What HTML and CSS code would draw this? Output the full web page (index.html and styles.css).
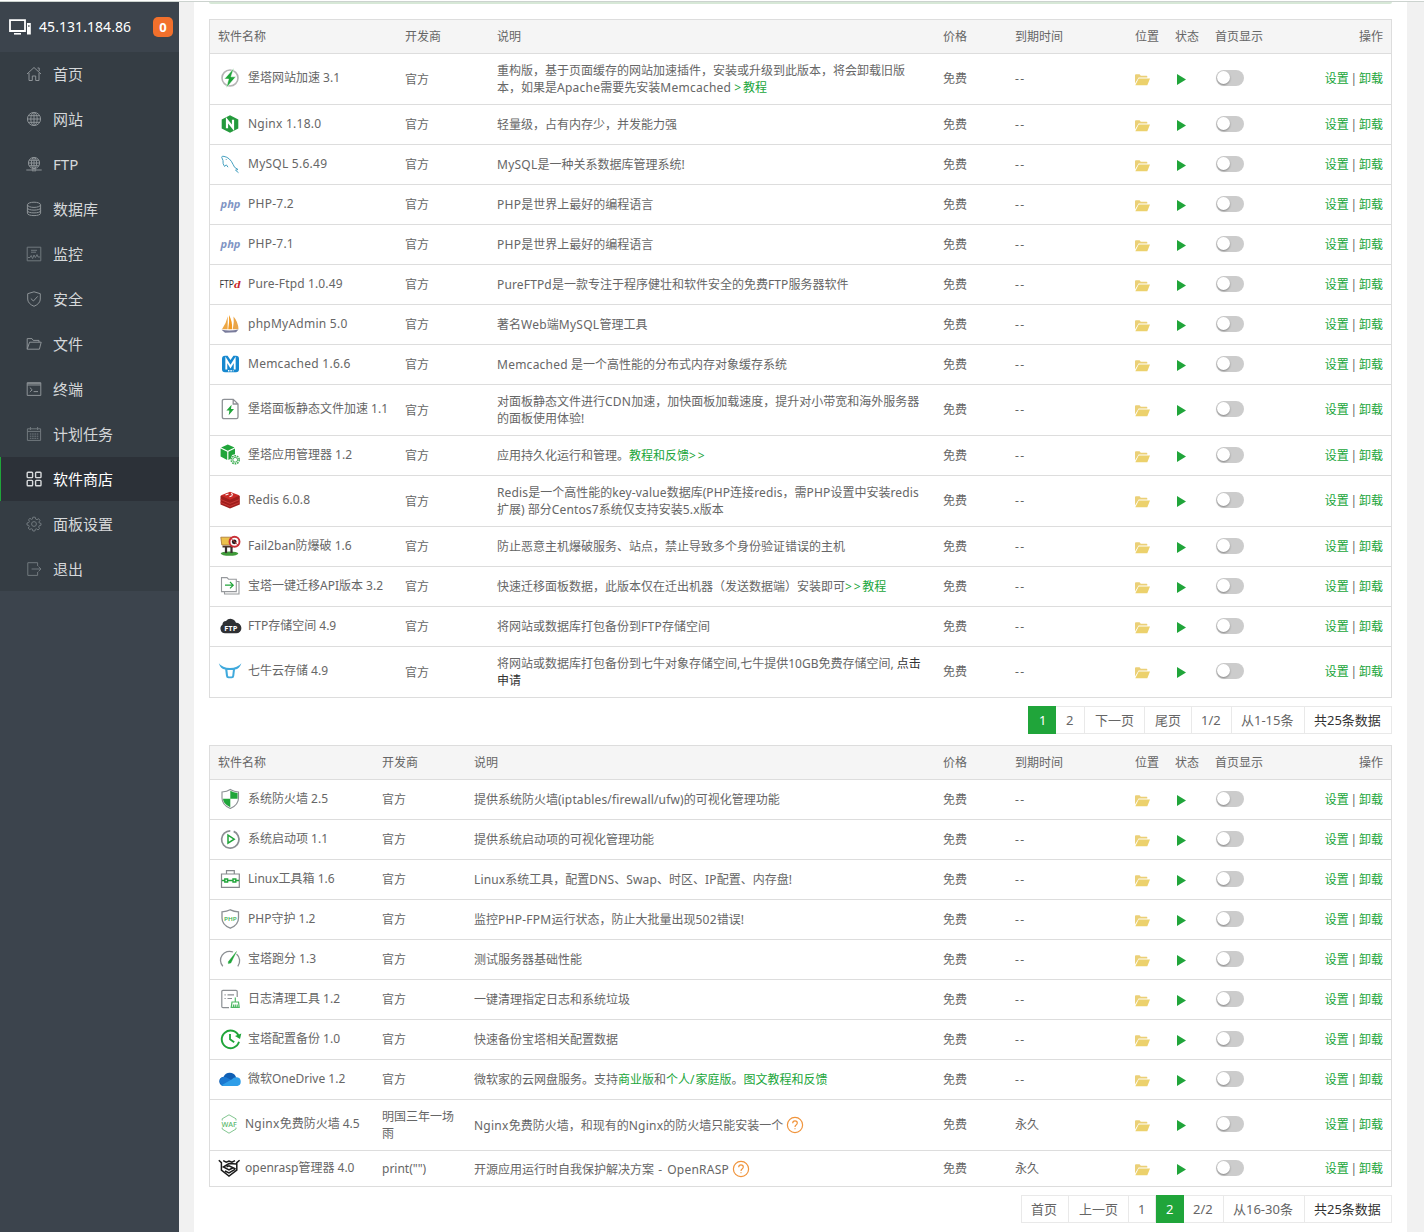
FILE: index.html
```html
<!DOCTYPE html>
<html lang="zh-CN">
<head>
<meta charset="utf-8">
<title>软件商店</title>
<link rel="stylesheet" href="styles.css">
</head>
<body>
<svg class="defs" aria-hidden="true">
  <symbol id="folder" viewBox="0 0 15 12"><path d="M0 9.5V1.2Q0 .3 1 .3H4.6L5.8 1.7H11.6Q12.3 1.7 12.3 2.6V3.6H3.6Z" fill="#ebd077"/><path d="M3.7 4.5H15L12.3 11.3H.3Z" fill="#ecd16c"/></symbol>
  <symbol id="help" viewBox="0 0 18 18"><circle cx="9" cy="9" r="7.6" fill="none" stroke="#f0943c" stroke-width="1.2"/><path d="M6.7 7.2Q6.7 4.9 9 4.9T11.3 7.1Q11.3 8.1 10.1 8.9Q9 9.6 9 10.9M9 12.2V13.3" fill="none" stroke="#f0943c" stroke-width="1.2"/></symbol>
</svg>
<div class="topline"></div>
<div class="app">
  <aside class="sidebar">
    <div class="host">
      <svg class="host-icon" viewBox="0 0 24 18"><path d="M2 2.2H17V13H2Z" fill="none" stroke="#fff" stroke-width="1.8"/><path d="M6 15.8H13" stroke="#fff" stroke-width="1.6"/><path d="M19 5H22.8V16.5H19Z" fill="#fff"/><path d="M20.9 7V9" stroke="#3c444d"/></svg>
      <span class="host-ip">45.131.184.86</span>
      <span class="badge">0</span>
    </div>
    <nav class="menu">
      <a class="item"><svg viewBox="0 0 16 16"><path d="M1 8 8 1.5 15 8M3 7V14.5H6.3V10H9.7V14.5H13V7M11.5 2H13.2V5"/></svg>首页</a>
      <a class="item"><svg viewBox="0 0 16 16"><circle cx="8" cy="8" r="6.6"/><ellipse cx="8" cy="8" rx="3.2" ry="6.6"/><path d="M8 1.4V14.6M1.4 8H14.6M2.4 4.7H13.6M2.4 11.3H13.6"/></svg>网站</a>
      <a class="item"><svg viewBox="0 0 16 16"><circle cx="8" cy="7" r="5.6"/><ellipse cx="8" cy="7" rx="2.6" ry="5.6"/><path d="M8 1.4V12.6M2.4 7H13.6M3.2 4.3H12.8M3.2 9.7H12.8M.3 14H5.5M10.5 14H15.7M6 13.2H10V14.8H6Z"/></svg>FTP</a>
      <a class="item"><svg viewBox="0 0 16 16"><ellipse cx="8" cy="3.8" rx="6.6" ry="2.6"/><path d="M1.4 4V12.2C1.4 15.4 14.6 15.4 14.6 12.2V4M1.4 7C1.4 9.8 14.6 9.8 14.6 7M1.4 9.8C1.4 12.6 14.6 12.6 14.6 9.8"/></svg>数据库</a>
      <a class="item dim"><svg viewBox="0 0 16 16"><path d="M1.2 1.2H14.8V14.8H1.2ZM5 4.3H11M5 6.2H10M2 11.5H4L5.2 9.5 6.6 12.6 8 9 9.4 11.6 11 8.6 12 11H14"/></svg>监控</a>
      <a class="item"><svg viewBox="0 0 16 16"><path d="M8 .8 14.3 2.7V8Q14.3 12.6 8 15.3 1.7 12.6 1.7 8V2.7ZM4.8 7.5 7.4 10 11.7 5.4"/></svg>安全</a>
      <a class="item"><svg viewBox="0 0 16 16"><path d="M1.2 13.2V2.6H6L7.2 4.4H13V6.2M1.2 13.2 3.6 6.2H15.2L13.4 13.2Z"/></svg>文件</a>
      <a class="item"><svg viewBox="0 0 16 16"><path d="M1.2 1.7H14.8V14.4H1.2ZM1.2 4H14.8M1.2 2.7H14.8M3.8 6.5 6.2 8.8 3.8 11M7.6 10.6H12"/></svg>终端</a>
      <a class="item dim"><svg viewBox="0 0 16 16"><path d="M1.4 2.8H14.6V14.4H1.4ZM1.4 5.4H14.6M4.4 1V4M11.6 1V4"/><path d="M3.8 8H12.4M3.8 10.2H12.4M3.8 12.3H12.4" stroke-dasharray="1.6 .7"/></svg>计划任务</a>
      <a class="item active"><svg viewBox="0 0 16 16"><rect x="1.2" y="1.2" width="5.4" height="5.4" rx=".8"/><rect x="9.6" y="1.2" width="5.4" height="5.4" rx=".8"/><rect x="1.2" y="9.4" width="5.4" height="5.4" rx=".8"/><rect x="9.6" y="9.4" width="5.4" height="5.4" rx=".8"/></svg>软件商店</a>
      <a class="item dim"><svg viewBox="0 0 16 16"><circle cx="8" cy="8" r="2.4"/><path d="M6.8 1.2H9.2L9.7 3.1 11 3.7 12.7 2.7 14 4.4 12.9 6 13.3 7 15 7.4V9.2L13.2 9.7 12.7 11 13.5 12.6 12 13.9 10.4 12.8 9.3 13.3 8.9 15H6.9L6.4 13.2 5.2 12.7 3.6 13.6 2.3 12 3.3 10.4 2.8 9.4 1 9V7L2.8 6.5 3.4 5.3 2.5 3.7 4 2.4 5.6 3.4 6.5 3Z"/></svg>面板设置</a>
      <a class="item dim"><svg viewBox="0 0 16 16"><path d="M11.6 5V1.7H1.8V14.4H11.6V11M5.6 8H15M12.5 5.6 15 8 12.5 10.4"/></svg>退出</a>
    </nav>
  </aside>
  <main class="panel">
    <div class="notice"></div>
    <table class="soft first">
      <colgroup><col class="c-name"><col class="c-dev"><col class="c-desc"><col class="c-price"><col class="c-time"><col class="c-icon"><col class="c-icon"><col class="c-op"></colgroup>
      <thead><tr><th>软件名称</th><th>开发商</th><th>说明</th><th>价格</th><th>到期时间</th><th>位置</th><th>状态</th><th><div class="op"><span>首页显示</span><span>操作</span></div></th></tr></thead>
      <tbody>
        <tr class="tall"><td><div class="name"><svg viewBox="0 0 24 24"><circle cx="12" cy="12" r="8" fill="none" stroke="#b4b4b4" stroke-width="1.6"/><path d="M15.8 2.2 6.4 13H10.6L8.4 21.8 17.8 10.8H13Z" fill="#20a53a" stroke="#fff" stroke-width=".5"/></svg>堡塔网站加速 3.1</div></td><td>官方</td><td>重构版，基于页面缓存的网站加速插件，安装或升级到此版本，将会卸载旧版<br>本，如果是<span class="w">Apache</span>需要先安装<span class="w">Memcached</span> <a><span class="gt">&gt;</span>教程</a></td><td>免费</td><td class="nil">--</td><td><svg class="fold"><use href="#folder"/></svg></td><td><i class="play"></i></td><td><div class="op"><i class="switch"></i><span class="links"><a>设置</a> | <a>卸载</a></span></div></td></tr>
        <tr><td><div class="name"><svg viewBox="0 0 24 24"><path d="M12 3.2 20.3 7.6V16.4L12 20.8 3.7 16.4V7.6Z" fill="#249a3c"/><path d="M9 16.2V8.2L15 15.8V7.8" fill="none" stroke="#fff" stroke-width="2.2"/></svg><span class="w">Nginx 1.18.0</span></div></td><td>官方</td><td>轻量级，占有内存少，并发能力强</td><td>免费</td><td class="nil">--</td><td><svg class="fold"><use href="#folder"/></svg></td><td><i class="play"></i></td><td><div class="op"><i class="switch"></i><span class="links"><a>设置</a> | <a>卸载</a></span></div></td></tr>
        <tr><td><div class="name"><svg viewBox="0 0 24 24"><path d="M6.6 14.5Q4.5 12 5 8.5L3.7 5.2Q3.8 3.7 6 4.4 12 5.5 15 12.3 15.8 15.8 20 17.5L17.5 18.2 20.5 20.7M6.6 14.5 8.3 12.8 10 15.2M8 7.2 8.6 8" fill="none" stroke="#45a0c0" stroke-width="1"/></svg><span class="w">MySQL 5.6.49</span></div></td><td>官方</td><td><span class="w">MySQL</span>是一种关系数据库管理系统!</td><td>免费</td><td class="nil">--</td><td><svg class="fold"><use href="#folder"/></svg></td><td><i class="play"></i></td><td><div class="op"><i class="switch"></i><span class="links"><a>设置</a> | <a>卸载</a></span></div></td></tr>
        <tr><td><div class="name"><svg viewBox="0 0 24 24"><text x="2.5" y="15.5" class="t-php" textLength="20" lengthAdjust="spacingAndGlyphs">php</text></svg><span class="w">PHP-7.2</span></div></td><td>官方</td><td><span class="w">PHP</span>是世界上最好的编程语言</td><td>免费</td><td class="nil">--</td><td><svg class="fold"><use href="#folder"/></svg></td><td><i class="play"></i></td><td><div class="op"><i class="switch"></i><span class="links"><a>设置</a> | <a>卸载</a></span></div></td></tr>
        <tr><td><div class="name"><svg viewBox="0 0 24 24"><text x="2.5" y="15.5" class="t-php" textLength="20" lengthAdjust="spacingAndGlyphs">php</text></svg><span class="w">PHP-7.1</span></div></td><td>官方</td><td><span class="w">PHP</span>是世界上最好的编程语言</td><td>免费</td><td class="nil">--</td><td><svg class="fold"><use href="#folder"/></svg></td><td><i class="play"></i></td><td><div class="op"><i class="switch"></i><span class="links"><a>设置</a> | <a>卸载</a></span></div></td></tr>
        <tr><td><div class="name"><svg viewBox="0 0 24 24"><text x="1.5" y="16" class="t-ftp" textLength="14.5" lengthAdjust="spacingAndGlyphs">FTP</text><text x="16" y="16" class="t-d" textLength="6.5" lengthAdjust="spacingAndGlyphs">d</text></svg><span class="v">Pure-Ftpd 1.0.49</span></div></td><td>官方</td><td><span class="v">PureFTPd</span>是一款专注于程序健壮和软件安全的免费<span class="v">FTP</span>服务器软件</td><td>免费</td><td class="nil">--</td><td><svg class="fold"><use href="#folder"/></svg></td><td><i class="play"></i></td><td><div class="op"><i class="switch"></i><span class="links"><a>设置</a> | <a>卸载</a></span></div></td></tr>
        <tr><td><div class="name"><svg viewBox="0 0 24 24"><path d="M9.8 4.2Q8 12 4 17.3H9.6Z" fill="#eda744"/><path d="M11 3Q14.4 9 14.2 17.3H10.2Q11.6 9 11 3Z" fill="#f39a22"/><path d="M15.5 4.5Q20.3 10 20.5 17.3H14.8Q16.4 10 15.5 4.5Z" fill="#e9a54a"/><path d="M3.5 17.8Q12 19.4 20.5 17.5L18 20.2 7 20.8Z" fill="#797b9b"/></svg><span class="w">phpMyAdmin 5.0</span></div></td><td>官方</td><td>著名<span class="w">Web</span>端<span class="w">MySQL</span>管理工具</td><td>免费</td><td class="nil">--</td><td><svg class="fold"><use href="#folder"/></svg></td><td><i class="play"></i></td><td><div class="op"><i class="switch"></i><span class="links"><a>设置</a> | <a>卸载</a></span></div></td></tr>
        <tr><td><div class="name"><svg viewBox="0 0 24 24"><path d="M7 3.7H9.6L12.5 8 15.4 3.7H18Q21 3.7 21 6.7V17.3Q21 20.3 18 20.3H7Q4 20.3 4 17.3V6.7Q4 3.7 7 3.7Z" fill="#1688cf"/><path d="M8.3 17.5V7.8L12.5 14.6 16.7 7.8V17.5" fill="none" stroke="#fff" stroke-width="1.9"/><path d="M10 18.7H15.5" stroke="#fff" stroke-width="1.4" stroke-dasharray="1.4 1"/></svg><span class="w">Memcached 1.6.6</span></div></td><td>官方</td><td><span class="w">Memcached</span> 是一个高性能的分布式内存对象缓存系统</td><td>免费</td><td class="nil">--</td><td><svg class="fold"><use href="#folder"/></svg></td><td><i class="play"></i></td><td><div class="op"><i class="switch"></i><span class="links"><a>设置</a> | <a>卸载</a></span></div></td></tr>
        <tr class="tall"><td><div class="name"><svg viewBox="0 0 24 24"><path d="M6 2.4H15.2L20 7V20Q20 21.6 18.5 21.6H6Q4.3 21.6 4.3 20V4Q4.3 2.4 6 2.4ZM15.2 2.4V7H20" fill="none" stroke="#8e9196" stroke-width="1.3"/><path d="M13.6 7.8 8.4 13.4H11.4L10.7 18.2 16 12H13Z" fill="#20a53a"/></svg>堡塔面板静态文件加速 1.1</div></td><td>官方</td><td>对面板静态文件进行<span class="w">CDN</span>加速，加快面板加载速度，提升对小带宽和海外服务器<br>的面板使用体验!</td><td>免费</td><td class="nil">--</td><td><svg class="fold"><use href="#folder"/></svg></td><td><i class="play"></i></td><td><div class="op"><i class="switch"></i><span class="links"><a>设置</a> | <a>卸载</a></span></div></td></tr>
        <tr><td><div class="name"><svg viewBox="0 0 24 24"><path d="M9.8 1.5 16.5 4.6 9.8 7.8 3.1 4.6ZM2.6 5.6 9.2 8.8V17L2.6 13.4ZM17 5.6 10.4 8.8V17L13 15.6 14 12 17 11.2Z" fill="#20a53a"/><circle cx="17.2" cy="16.8" r="4" fill="#fff" stroke="#43b057" stroke-width="1.6" stroke-dasharray="1.7 .8"/><circle cx="17.2" cy="16.8" r="2.4" fill="none" stroke="#43b057"/></svg>堡塔应用管理器 1.2</div></td><td>官方</td><td>应用持久化运行和管理。<a>教程和反馈<span class="gt">&gt;&gt;</span></a></td><td>免费</td><td class="nil">--</td><td><svg class="fold"><use href="#folder"/></svg></td><td><i class="play"></i></td><td><div class="op"><i class="switch"></i><span class="links"><a>设置</a> | <a>卸载</a></span></div></td></tr>
        <tr class="tall"><td><div class="name"><svg viewBox="0 0 24 24"><path d="M2.5 8V16.5L12 20.6 21.8 16.5V8Z" fill="#a01e1c"/><path d="M2.5 7.6 12 3.8 21.8 7.6 12 11.8Z" fill="#c92a26"/><path d="M2.5 11.4 12 15.4 21.8 11.4M2.5 14.4 12 18.4 21.8 14.4" fill="none" stroke="#cf3f3b" stroke-width=".8"/><path d="M7.5 7 10.5 6M11.5 8.8 14.5 7.6M13 5.6 15 6.4" stroke="#fff" stroke-width="1.1"/></svg><span class="v">Redis 6.0.8</span></div></td><td>官方</td><td><span class="v">Redis</span>是一个高性能的<span class="v">key-value</span>数据库(<span class="v">PHP</span>连接<span class="v">redis</span>，需<span class="v">PHP</span>设置中安装<span class="v">redis</span><br>扩展) 部分<span class="v">Centos7</span>系统仅支持安装<span class="v">5.x</span>版本</td><td>免费</td><td class="nil">--</td><td><svg class="fold"><use href="#folder"/></svg></td><td><i class="play"></i></td><td><div class="op"><i class="switch"></i><span class="links"><a>设置</a> | <a>卸载</a></span></div></td></tr>
        <tr><td><div class="name"><svg viewBox="0 0 24 24"><ellipse cx="11.5" cy="19.6" rx="8.8" ry="2.2" fill="#3f9a39"/><path d="M2.8 3.2H13V11H3.8Z" fill="#ecc14b" stroke="#a8742f" stroke-width=".8"/><path d="M4.5 12.6H15" stroke="#4b3327" stroke-width="1.8"/><path d="M8 13V19M13.5 13V19" stroke="#3a3030" stroke-width="2.2"/><circle cx="16.5" cy="7.8" r="5" fill="#fff" stroke="#c92f36" stroke-width="1.9"/><circle cx="16.2" cy="7.8" r="2.4" fill="#252020"/><path d="M13 4.5 20 11.2" stroke="#c92f36" stroke-width="1"/></svg>Fail2ban防爆破 1.6</div></td><td>官方</td><td>防止恶意主机爆破服务、站点，禁止导致多个身份验证错误的主机</td><td>免费</td><td class="nil">--</td><td><svg class="fold"><use href="#folder"/></svg></td><td><i class="play"></i></td><td><div class="op"><i class="switch"></i><span class="links"><a>设置</a> | <a>卸载</a></span></div></td></tr>
        <tr><td><div class="name"><svg viewBox="0 0 24 24"><path d="M3.5 3.6H9L10.5 5.2H18.3V17.6H3.5Z" fill="none" stroke="#96999c" stroke-width="1.1"/><path d="M6.5 17.6V20H21V7.5H18.5" fill="none" stroke="#96999c" stroke-width="1.1"/><path d="M7 11.2H15M12 8 15.2 11.2 12 14.4" fill="none" stroke="#20a53a" stroke-width="1.2"/></svg>宝塔一键迁移API版本 3.2</div></td><td>官方</td><td>快速迁移面板数据，此版本仅在迁出机器（发送数据端）安装即可<a><span class="gt">&gt;&gt;</span>教程</a></td><td>免费</td><td class="nil">--</td><td><svg class="fold"><use href="#folder"/></svg></td><td><i class="play"></i></td><td><div class="op"><i class="switch"></i><span class="links"><a>设置</a> | <a>卸载</a></span></div></td></tr>
        <tr><td><div class="name"><svg viewBox="0 0 24 24"><path d="M7 19.3A4.7 4.7 0 0 1 4.4 10.8 4 4 0 0 1 8 7 5.8 5.8 0 0 1 18 8.8 5.2 5.2 0 0 1 18.3 19.3Z" fill="#2e3033"/><text x="6.3" y="17" class="t-cloud" textLength="13" lengthAdjust="spacingAndGlyphs">FTP</text></svg>FTP存储空间 4.9</div></td><td>官方</td><td>将网站或数据库打包备份到<span class="w">FTP</span>存储空间</td><td>免费</td><td class="nil">--</td><td><svg class="fold"><use href="#folder"/></svg></td><td><i class="play"></i></td><td><div class="op"><i class="switch"></i><span class="links"><a>设置</a> | <a>卸载</a></span></div></td></tr>
        <tr class="tall"><td><div class="name"><svg viewBox="0 0 24 24"><path d="M.8 4.2Q4.5 9 12 9T23.4 4.2Q21.5 9.8 17 10.6L16.2 17Q16 19.2 13.8 19.2H10.4Q8.2 19.2 8 17L7.2 10.6Q2.5 9.8 .8 4.2Z" fill="#3fa9dc"/><path d="M9.4 11H14.9L14.3 16.6Q14.2 17.6 13.4 17.6H10.9Q10.1 17.6 10 16.6Z" fill="#fff"/></svg>七牛云存储 4.9</div></td><td>官方</td><td>将网站或数据库打包备份到七牛对象存储空间,七牛提供10GB免费存储空间, <span class="dark">点击<br>申请</span></td><td>免费</td><td class="nil">--</td><td><svg class="fold"><use href="#folder"/></svg></td><td><i class="play"></i></td><td><div class="op"><i class="switch"></i><span class="links"><a>设置</a> | <a>卸载</a></span></div></td></tr>
      </tbody>
    </table>
    <div class="pager">
      <span class="w28 cur">1</span><span class="w29">2</span><span class="w60">下一页</span><span class="w47">尾页</span><span class="w40">1/2</span><span class="w73">从1-15条</span><span class="w87 dark">共25条数据</span>
    </div>
    <table class="soft second">
      <colgroup><col class="c-name"><col class="c-dev"><col class="c-desc"><col class="c-price"><col class="c-time"><col class="c-icon"><col class="c-icon"><col class="c-op"></colgroup>
      <thead><tr><th>软件名称</th><th>开发商</th><th>说明</th><th>价格</th><th>到期时间</th><th>位置</th><th>状态</th><th><div class="op"><span>首页显示</span><span>操作</span></div></th></tr></thead>
      <tbody>
        <tr><td><div class="name"><svg viewBox="0 0 24 24"><path d="M12.3 2.5Q16 4.8 20.5 5V11Q20.5 18 12.3 21.5 4 18 4 11V5Q9 4.8 12.3 2.5Z" fill="#fff" stroke="#8b8f93" stroke-width="1.1"/><path d="M12.3 3.8V11.8H5Q5 17 12.3 20.3V11.8H19.6V5.9Q15.5 5.5 12.3 3.8Z" fill="#20a53a"/></svg>系统防火墙 2.5</div></td><td>官方</td><td>提供系统防火墙(<span class="v">iptables/firewall/ufw</span>)的可视化管理功能</td><td>免费</td><td class="nil">--</td><td><svg class="fold"><use href="#folder"/></svg></td><td><i class="play"></i></td><td><div class="op"><i class="switch"></i><span class="links"><a>设置</a> | <a>卸载</a></span></div></td></tr>
        <tr><td><div class="name"><svg viewBox="0 0 24 24"><path d="M14 3.8A8.7 8.7 0 0 1 13 21 8.6 8.6 0 0 1 10.6 4" fill="none" stroke="#8b8f93" stroke-width="1.7" transform="rotate(12 12 12)"/><path d="M10 8.2V16.2L16.2 12.2Z" fill="none" stroke="#20a53a" stroke-width="1.5"/></svg>系统启动项 1.1</div></td><td>官方</td><td>提供系统启动项的可视化管理功能</td><td>免费</td><td class="nil">--</td><td><svg class="fold"><use href="#folder"/></svg></td><td><i class="play"></i></td><td><div class="op"><i class="switch"></i><span class="links"><a>设置</a> | <a>卸载</a></span></div></td></tr>
        <tr><td><div class="name"><svg viewBox="0 0 24 24"><path d="M3.5 7H21.3V20.4H3.5ZM8.5 7V3.6H16.3V7" fill="none" stroke="#85898d" stroke-width="1.2"/><path d="M4 13.5H6.8M9.8 13.5H14.5M18 13.5H21M6.8 12H9.6V15H6.8ZM15 12H17.8V15H15Z" fill="none" stroke="#20a53a" stroke-width="1.4"/></svg>Linux工具箱 1.6</div></td><td>官方</td><td><span class="v">Linux</span>系统工具，配置<span class="v">DNS</span>、<span class="v">Swap</span>、时区、<span class="v">IP</span>配置、内存盘!</td><td>免费</td><td class="nil">--</td><td><svg class="fold"><use href="#folder"/></svg></td><td><i class="play"></i></td><td><div class="op"><i class="switch"></i><span class="links"><a>设置</a> | <a>卸载</a></span></div></td></tr>
        <tr><td><div class="name"><svg viewBox="0 0 24 24"><path d="M12.3 2.8Q16 4.6 20.5 4.8V11Q20.5 18 12.3 21.2 4 18 4 11V4.8Q9 4.6 12.3 2.8Z" fill="none" stroke="#8b8f93" stroke-width="1.3"/><text x="6" y="13.5" class="t-guard" textLength="12.6" lengthAdjust="spacingAndGlyphs">PHP</text></svg>PHP守护 1.2</div></td><td>官方</td><td>监控<span class="w">PHP-FPM</span>运行状态，防止大批量出现<span class="w">502</span>错误!</td><td>免费</td><td class="nil">--</td><td><svg class="fold"><use href="#folder"/></svg></td><td><i class="play"></i></td><td><div class="op"><i class="switch"></i><span class="links"><a>设置</a> | <a>卸载</a></span></div></td></tr>
        <tr><td><div class="name"><svg viewBox="0 0 24 24"><path d="M4.8 19.3A9 9 0 0 1 15 5M18.5 7A9 9 0 0 1 19.8 19.3" fill="none" stroke="#8b8f93" stroke-width="1.3"/><path d="M18.5 4.5 10.3 14.8V16.6L12.8 16Z" fill="#20a53a" stroke="#20a53a" stroke-width=".4"/></svg>宝塔跑分 1.3</div></td><td>官方</td><td>测试服务器基础性能</td><td>免费</td><td class="nil">--</td><td><svg class="fold"><use href="#folder"/></svg></td><td><i class="play"></i></td><td><div class="op"><i class="switch"></i><span class="links"><a>设置</a> | <a>卸载</a></span></div></td></tr>
        <tr><td><div class="name"><svg viewBox="0 0 24 24"><path d="M11 20.7H5Q3.8 20.7 3.8 19.5V4.5Q3.8 3.4 5 3.4H18Q19.2 3.4 19.2 4.5V10" fill="none" stroke="#8b8f93" stroke-width="1.2"/><path d="M6.5 7.8H7.7M9.5 7.8H16M6.5 11.5H7.7M9.5 11.5H14" stroke="#8b8f93" stroke-width="1.2"/><path d="M17.3 10.5V15M14 15H20.5L21.2 20.3H13.2ZM15.5 20V17.5M17.3 20V17.5M19.2 20V17.5" fill="none" stroke="#4db863" stroke-width="1.2"/></svg>日志清理工具 1.2</div></td><td>官方</td><td>一键清理指定日志和系统垃圾</td><td>免费</td><td class="nil">--</td><td><svg class="fold"><use href="#folder"/></svg></td><td><i class="play"></i></td><td><div class="op"><i class="switch"></i><span class="links"><a>设置</a> | <a>卸载</a></span></div></td></tr>
        <tr><td><div class="name"><svg viewBox="0 0 24 24"><path d="M21 14.8A8.8 8.8 0 1 1 20.6 8.8" fill="none" stroke="#20a53a" stroke-width="1.9"/><path d="M17 9 23.3 6.4 22 12Z" fill="#20a53a"/><path d="M12 7V12.2L16.2 15.3" fill="none" stroke="#20a53a" stroke-width="1.8"/></svg>宝塔配置备份 1.0</div></td><td>官方</td><td>快速备份宝塔相关配置数据</td><td>免费</td><td class="nil">--</td><td><svg class="fold"><use href="#folder"/></svg></td><td><i class="play"></i></td><td><div class="op"><i class="switch"></i><span class="links"><a>设置</a> | <a>卸载</a></span></div></td></tr>
        <tr><td><div class="name"><svg viewBox="0 0 24 24"><path d="M6 19A4.6 4.6 0 0 1 5.6 9.8 6.8 6.8 0 0 1 17.8 9.5L19 19Z" fill="#0f5fb4"/><path d="M6 19A4.6 4.6 0 0 1 5 10.1Q7.5 9.4 10 11.2L21 17 19 19Z" fill="#1b78d0"/><path d="M6 19Q4.5 19 3.5 18.2L14 12.2A5 5 0 0 1 19 10.3 4.4 4.4 0 0 1 19 19Z" fill="#2f9ee8"/></svg>微软OneDrive 1.2</div></td><td>官方</td><td>微软家的云网盘服务。支持<a>商业版</a>和<a>个人<span class="gap">/</span>家庭版</a>。<a>图文教程和反馈</a></td><td>免费</td><td class="nil">--</td><td><svg class="fold"><use href="#folder"/></svg></td><td><i class="play"></i></td><td><div class="op"><i class="switch"></i><span class="links"><a>设置</a> | <a>卸载</a></span></div></td></tr>
        <tr class="tall"><td><div class="name near"><svg viewBox="0 0 24 24"><path d="M4.2 8.5V6.8L11 2.8 18 6.8V8.5M4.2 15.5V17L11 21.2 18 17V15.5" fill="none" stroke="#82c690" stroke-width="1"/><text x="3.4" y="14.5" class="t-waf" textLength="15.4" lengthAdjust="spacingAndGlyphs">WAF</text></svg><span class="w">Nginx</span>免费防火墙 4.5</div></td><td>明国三年一场<br>雨</td><td><span class="w">Nginx</span>免费防火墙，和现有的<span class="w">Nginx</span>的防火墙只能安装一个 <svg class="help"><use href="#help"/></svg></td><td>免费</td><td>永久</td><td><svg class="fold"><use href="#folder"/></svg></td><td><i class="play"></i></td><td><div class="op"><i class="switch"></i><span class="links"><a>设置</a> | <a>卸载</a></span></div></td></tr>
        <tr class="last"><td><div class="name near"><svg viewBox="0 0 24 24"><path d="M.8 4.2 3.4 6.6V14.2L11 20 18.8 14.2V6.6L21.6 4.2M5.2 4.6 8.2 6.2 11 5 14 6.2 17 4.6M18.6 8 11 7.6 5.4 11 11 14 14.6 12M7 15 11 17 17 13.4M8.6 10.8 11 9.8 17.6 13" fill="none" stroke="#1b1b1b" stroke-width="1.5"/></svg>openrasp管理器 4.0</div></td><td>print("")</td><td>开源应用运行时自我保护解决方案<span class="gap"> - </span><span class="w">OpenRASP</span> <svg class="help"><use href="#help"/></svg></td><td>免费</td><td>永久</td><td><svg class="fold"><use href="#folder"/></svg></td><td><i class="play"></i></td><td><div class="op"><i class="switch"></i><span class="links"><a>设置</a> | <a>卸载</a></span></div></td></tr>
      </tbody>
    </table>
    <div class="pager">
      <span class="w48">首页</span><span class="w60">上一页</span><span class="w27">1</span><span class="w28 cur">2</span><span class="w40">2/2</span><span class="w81">从16-30条</span><span class="w87 dark">共25条数据</span>
    </div>
  </main>
</div>
</body>
</html>
```
FILE: styles.css
```css
* { box-sizing: border-box; }
body {
  margin: 0;
  height: 1232px;
  overflow: hidden;
  background: #f1f1f1;
  color: #666;
  font: 12px/17px "Noto Sans", "Noto Sans CJK SC", sans-serif;
}
.defs { display: none; }
.topline { height: 2px; background: #fff; border-bottom: 1px solid #ccd3cf; }
.app { display: flex; height: 1230px; }

.sidebar { width: 179px; background: #3c444d; flex: none; }
.host { display: flex; align-items: center; height: 50px; padding: 0 6px 0 8px; color: #fff; }
.host-icon { width: 24px; height: 18px; }
.host-ip { margin-left: 7px; padding-bottom: 2px; font-size: 14px; letter-spacing: .06px; }
.badge {
  width: 20px; height: 20px; margin-left: auto; border-radius: 5px;
  background: #f2702c; font-size: 13px; font-weight: 700; line-height: 20px; text-align: center;
}
.menu { height: 539px; background: #353d44; }
.item {
  display: flex; align-items: center; height: 44px; margin-bottom: 1px; padding-left: 26px;
  color: #d5d8da; font-size: 15px;
}
.item svg { width: 16px; height: 16px; margin-right: 11px; fill: none; stroke: #8d9397; stroke-width: 1; }
.item.dim svg { stroke: #71797e; }
.item.active { background: #2c3138; color: #fff; padding-left: 25px; border-left: 1px solid #20a53a; }
.item.active svg { stroke: #d8dadc; stroke-width: 1.4; }

.panel { width: 1213px; margin-left: 15px; padding: 0 15px; background: #fff; flex: none; }
.notice { width: 1183px; height: 2px; margin-bottom: 15px; background: #d7e8d7; border-radius: 0 0 3px 3px; }

.soft {
  width: 1183px; table-layout: fixed; border-spacing: 0;
  border: 1px solid #ddd; border-bottom: 0; white-space: nowrap;
}
.soft th, .soft td {
  height: 40px; padding: 0 0 0 8px; border-bottom: 1px solid #ddd;
  text-align: left; vertical-align: middle; font-weight: 400;
}
.soft th { height: 34px; background: #f5f5f5; }
.soft .tall td { height: 51px; }
.soft .tall td:not(:nth-child(2)):not(:nth-child(3)) { padding-bottom: 1px; }
.soft .last td { height: 36px; }
.c-name { width: 187px; }
.c-dev { width: 92px; }
.c-desc { width: 446px; }
.second .c-name { width: 164px; }
.second .c-desc { width: 469px; }
.c-price { width: 72px; }
.c-time { width: 120px; }
.c-icon { width: 40px; }
.c-op { width: 184px; }
.soft a { color: #20a53a; }
.dark { color: #333; }
.w { letter-spacing: .25px; }
.v { letter-spacing: .15px; }
.gt { letter-spacing: 1.8px; }
.gap { letter-spacing: 1px; }
.soft .nil { letter-spacing: 1.4px; }
.links { word-spacing: -1.3px; }

.name { display: flex; align-items: center; height: 24px; margin-top: -1px; padding-bottom: 1px; white-space: pre; }
.name svg { width: 24px; height: 24px; margin: 1px 6px 0 0; flex: none; }
.name.near svg { margin-right: 3px; }
.fold { display: block; width: 15px; height: 12px; margin-top: 3px; }
.play {
  display: block; width: 9px; height: 11px; margin: 2px 0 0 2px;
  background: #20a53a; clip-path: polygon(0 0, 100% 50%, 0 100%);
}
.op { display: flex; align-items: center; justify-content: space-between; padding-right: 8px; }
.switch { width: 28px; height: 16px; margin: 0 0 1px; margin-left: 1px; padding: 1px; border-radius: 8px; background: #ccc; }
.switch::before {
  content: ""; display: block; width: 13px; height: 13px; border-radius: 50%;
  background: #fff; box-shadow: 0 1px 2px rgba(0, 0, 0, .35);
}
.help { width: 18px; height: 18px; vertical-align: -4px; }

.t-php { font: italic 700 11px "Open Sans", sans-serif; fill: #7f95c4; }
.t-ftp { font: 10px "Open Sans", sans-serif; fill: #333; }
.t-d { font: italic 700 11px "Liberation Serif", serif; fill: #c8232c; }
.t-cloud { font: 700 7px "Open Sans", sans-serif; fill: #fff; }
.t-guard { font: 600 6px "Open Sans", sans-serif; fill: #35ad4c; }
.t-waf { font: 600 7px "Open Sans", sans-serif; fill: #62bb74; }

.pager { display: flex; justify-content: flex-end; height: 28px; margin: 8px 0 11px; font-size: 13px; line-height: 26px; }
.pager span {
  padding-left: 9px; white-space: nowrap;
  border: 1px solid #e9e9e9; border-left: 0;
}
.pager span:first-child { border-left: 1px solid #e9e9e9; }
.pager span.cur { padding-left: 10px; background: #20a53a; border-color: #20a53a; color: #fff; }
.w27 { width: 27px; }
.w28 { width: 28px; }
.w29 { width: 29px; }
.pager .w29 { padding-left: 10px; }
.w40 { width: 40px; }
.w47 { width: 47px; }
.w48 { width: 48px; }
.w60 { width: 60px; }
.pager .w60, .pager .w47 { padding-left: 10px; }
.w73 { width: 73px; }
.w81 { width: 81px; }
.w87 { width: 87px; }
```
